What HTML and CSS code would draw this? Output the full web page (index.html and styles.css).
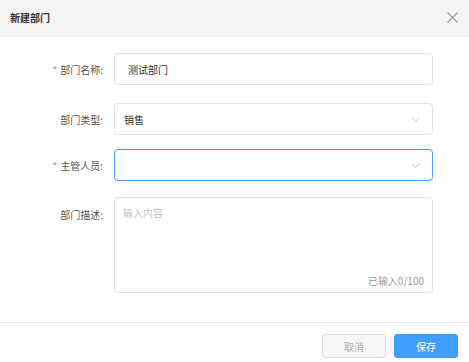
FILE: index.html
```html
<!DOCTYPE html>
<html lang="zh">
<head>
  <meta charset="UTF-8">
  <title>新建部门</title>
  <link rel="stylesheet" href="styles.css">
</head>
<body>
  <div class="dialog">
    <div class="dialog-header">
      <span class="dialog-title">新建部门</span>
      <span class="dialog-close">
        <svg width="11" height="11" viewBox="0 0 11 11"><path d="M0.5 0.5 L10.5 10.5 M10.5 0.5 L0.5 10.5" stroke="#999" stroke-width="1.1" fill="none"/></svg>
      </span>
    </div>
    <div class="dialog-body">
      <div class="form-row row-1">
        <label class="form-label"><span class="required">*</span>部门名称:</label>
        <div class="form-control">
          <input type="text" class="text-input" value="测试部门">
        </div>
      </div>
      <div class="form-row row-2">
        <label class="form-label">部门类型:</label>
        <div class="form-control">
          <div class="select">
            <span class="select-value">销售</span>
            <svg class="select-arrow" width="9" height="5" viewBox="0 0 9 5"><path d="M0.5 0.5 L4.5 4.5 L8.5 0.5" stroke="#c0c4cc" stroke-width="1" fill="none"/></svg>
          </div>
        </div>
      </div>
      <div class="form-row row-3">
        <label class="form-label"><span class="required">*</span>主管人员:</label>
        <div class="form-control">
          <div class="select select-focus">
            <span class="select-value"></span>
            <svg class="select-arrow" width="9" height="5" viewBox="0 0 9 5"><path d="M0.5 0.5 L4.5 4.5 L8.5 0.5" stroke="#c0c4cc" stroke-width="1" fill="none"/></svg>
          </div>
        </div>
      </div>
      <div class="form-row">
        <label class="form-label label-top">部门描述:</label>
        <div class="form-control">
          <div class="textarea">
            <span class="placeholder">输入内容</span>
            <span class="counter">已输入0/100</span>
          </div>
        </div>
      </div>
    </div>
    <div class="dialog-footer">
      <button class="btn btn-cancel">取消</button>
      <button class="btn btn-primary">保存</button>
    </div>
  </div>
</body>
</html>
```

FILE: styles.css
```css
body {
  margin: 0;
  font-family: "Noto Sans CJK SC", "Liberation Sans", sans-serif;
  font-size: 10px;
  color: #333;
  background: #fff;
}
.dialog {
  width: 469px;
}
.dialog-header {
  height: 37px;
  background-color: #f4f4f4;
  display: flex;
  align-items: center;
  justify-content: space-between;
  padding: 0 11px 0 10px;
  box-sizing: border-box;
}
.dialog-title {
  font-size: 10px;
  color: #333;
  font-weight: bold;
  margin-top: -3px;
}
.dialog-close {
  display: flex;
  margin-top: -3px;
}
.dialog-body {
  padding: 16px 36px 29px 0;
}
.form-row {
  display: flex;
  align-items: center;
}
.row-1 {
  margin-bottom: 18px;
}
.row-2 {
  margin-bottom: 14px;
}
.row-3 {
  margin-bottom: 16px;
}
.form-label {
  width: 103px;
  padding-right: 11px;
  text-align: right;
  color: #555;
}
.form-row:last-child {
  align-items: flex-start;
}
.label-top {
  padding-top: 10px;
}
.required {
  color: #f56c6c;
  margin-right: 3px;
}
.form-control {
  flex: 1;
}
.text-input {
  width: 100%;
  height: 32px;
  box-sizing: border-box;
  border: 1px solid #e2e2e2;
  border-radius: 4px;
  padding: 0 13px;
  font-family: inherit;
  font-size: 10px;
  color: #333;
  outline: none;
}
.select {
  height: 32px;
  box-sizing: border-box;
  border: 1px solid #e2e2e2;
  border-radius: 4px;
  padding: 0 12px 0 9px;
  display: flex;
  align-items: center;
  justify-content: space-between;
}
.select-focus {
  border-color: #4c9ef8;
}
.select-value {
  color: #333;
}
.textarea {
  height: 96px;
  box-sizing: border-box;
  border: 1px solid #e2e2e2;
  border-radius: 4px;
  padding: 7px 8px 4px 8px;
  display: flex;
  flex-direction: column;
  justify-content: space-between;
}
.placeholder {
  color: #c0c4cc;
}
.counter {
  align-self: flex-end;
  color: #999;
}
.dialog-footer {
  border-top: 1px solid #e8e8e8;
  padding: 11px 11px 0 0;
  display: flex;
  justify-content: flex-end;
  gap: 8px;
}
.btn {
  width: 64px;
  height: 24px;
  border-radius: 3px;
  font-family: inherit;
  font-size: 10px;
  cursor: pointer;
}
.btn-cancel {
  background-color: #f7f7f7;
  border: 1px solid #dcdcdc;
  color: #aaa;
}
.btn-primary {
  background-color: #409eff;
  border: 1px solid #409eff;
  color: #fff;
}
```
